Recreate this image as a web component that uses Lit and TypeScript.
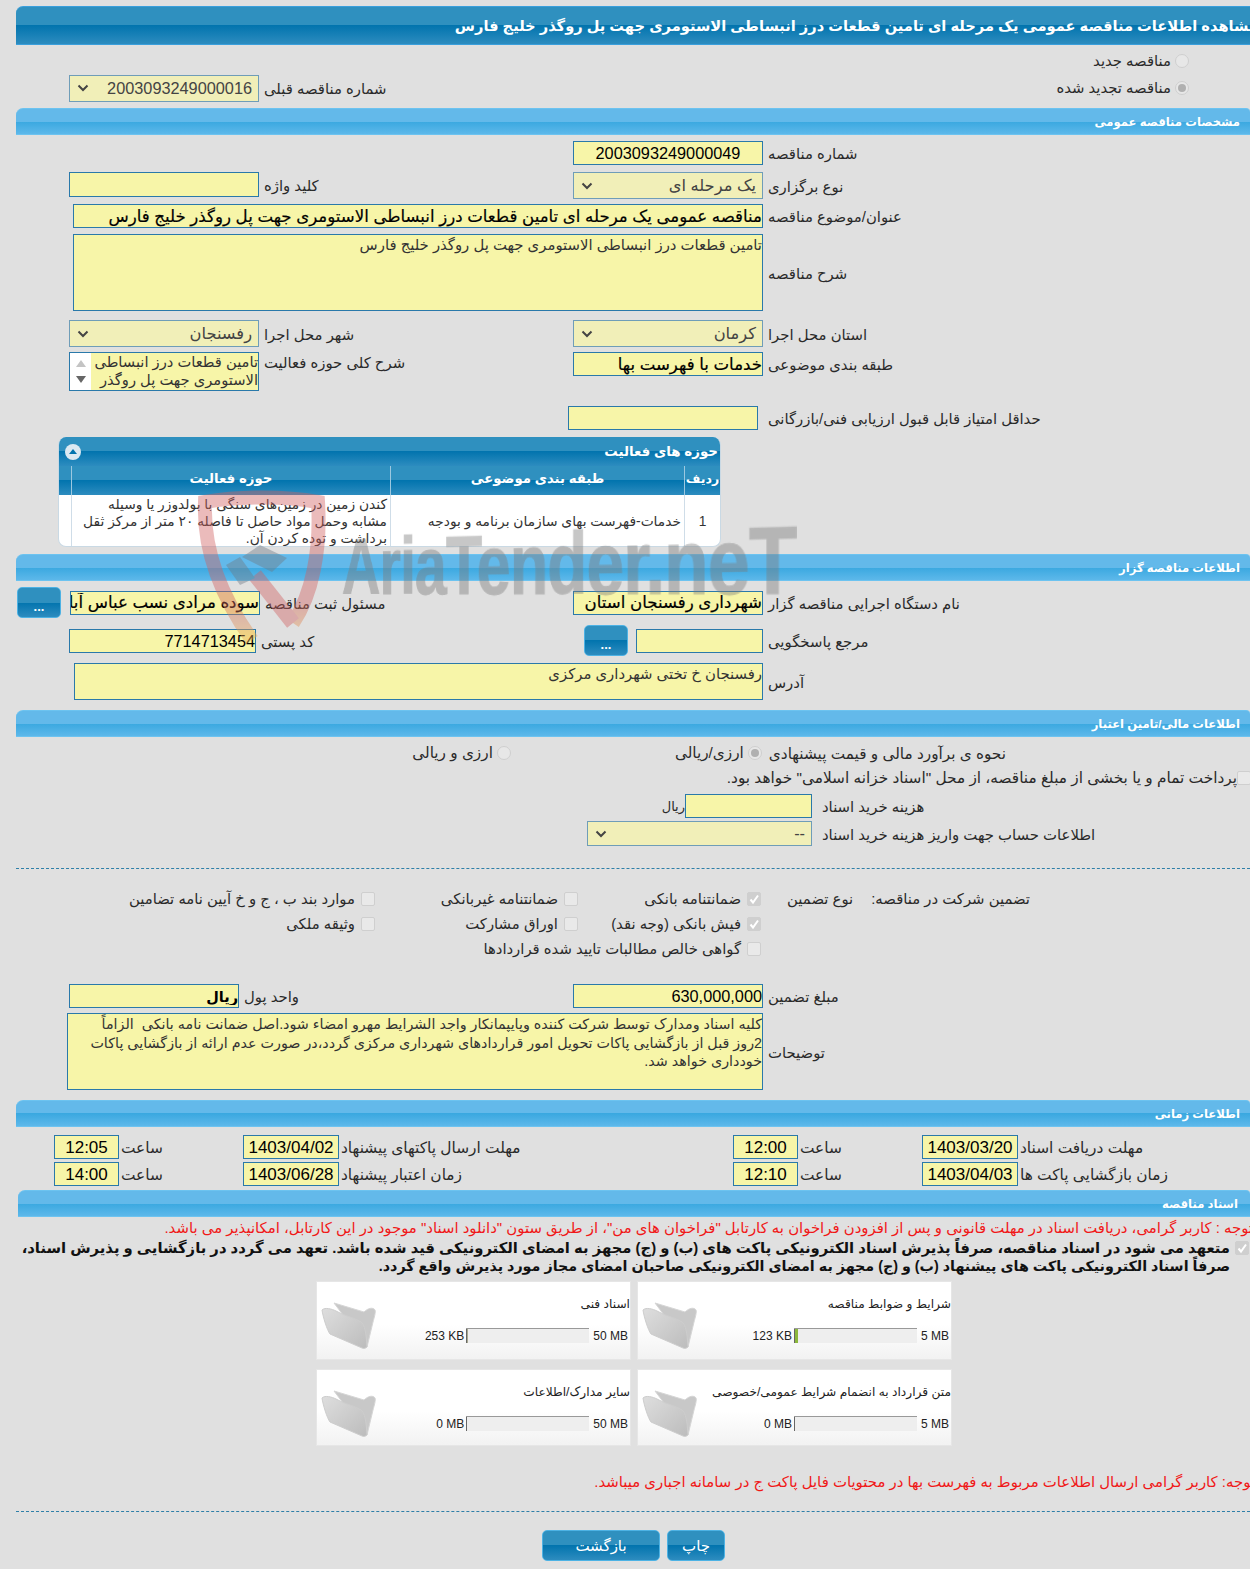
import { LitElement, html, css } from "lit";
import { customElement } from "lit/decorators.js";

const chevron = html`<svg class="chev" width="12" height="8" viewBox="0 0 12 8"><path d="M1.5 1.5 6 6l4.500-4.500" fill="none" stroke="#444" stroke-width="2"/></svg>`;
const check = html`<svg width="12" height="12" viewBox="0 0 12 12"><path d="M2.500 6.500 5 9.500 10 2.500" fill="none" stroke="#fff" stroke-width="2"/></svg>`;
const folder = (paper: boolean) => html`<svg class="folder" width="60" height="52" viewBox="0 0 60 52">
  <defs><linearGradient id="fg" x1="0" y1="0" x2="1" y2="1"><stop offset="0" stop-color="#dedede"/><stop offset="1" stop-color="#bcbcbc"/></linearGradient></defs>
  <path d="M14 6 44 15c4-4 9-5 11-2 1 2-1 8-2 12l-6 25z" fill="#c8c8c8" stroke="#d6d6d6" stroke-linejoin="round"/>
  ${paper ? html`<path d="M15 4 47 14 50 24 45 38 13 16z" fill="#fbfbfb" stroke="#e4e4e4" stroke-linejoin="round"/>` : ""}
  <path d="M2 13c3-3 10-1 14 1 8 5 18 6 25 11 3 2 4 8 5 13l1 12c-1 1-3 2-5 1L10 37C7 33 3 20 2 13z" fill="url(#fg)" stroke="#cdcdcd" stroke-linejoin="round"/>
</svg>`;

@customElement("app-root")
export class AppRoot extends LitElement {
  static styles = css`
    :host { display:block; position:relative; width:1250px; height:1569px; overflow:hidden; background:#e0e0e0;
      font-family:"Liberation Sans","DejaVu Sans",sans-serif; font-size:14.85px; color:#2a2a2a; direction:rtl; }
    * { box-sizing:border-box; }
    .page { padding:6px 0 0 16px; }
    .title { height:39px; border:1px solid #3a9fdc; border-width:1px 0 1px 0; border-top-left-radius:7px;
      background:linear-gradient(#2f90bf 0 50%,#0274ae 50%,#2d8cbf 100%); color:#fff; font-weight:bold; font-size:14.65px;
      display:flex; align-items:center; white-space:nowrap; overflow:hidden; }
    .title span { margin-right:-8px; }
    .sec { height:27px; border-top-left-radius:7px; border-top-right-radius:4px; border-top:1px solid #6cc3f0; border-bottom:1px solid #6cc3f0;
      background:linear-gradient(#63b9ea 0 50%,#3aa8e0 50%,#5db8ea 100%); color:#fff; font-weight:bold; font-size:11.6px;
      display:flex; align-items:center; padding-right:10px; }
    .sec.s5 { margin-left:2px; padding-right:12px; }
    .mt10 { margin-top:10px; }
    .row { display:flex; align-items:center; min-width:0; }
    .row.top { align-items:flex-start; }
    .cr { flex:none; width:677px; display:flex; align-items:center; justify-content:flex-end; gap:5px; }
    .cr.wide { width:682px; gap:10px; }
    .cr.withbtn { padding-left:11px; }
    .cl { flex:1; display:flex; align-items:center; justify-content:flex-end; gap:5px; padding-left:53px; min-width:0; }
    .cl.pl1 { padding-left:1px; }
    .cf { flex:1; display:flex; align-items:center; justify-content:flex-end; gap:5px; }
    .top .cl.up { align-items:flex-start; }
    .pl57 { padding-left:57px; } .pl58 { padding-left:58px; } .pl51 { padding-left:51px; }
    .lbl { white-space:nowrap; padding-top:2px; }
    .uplbl { padding-top:2px; }
    input, textarea { font:inherit; color:#000; direction:rtl; border:1px solid #2a79aa; background:#f7f5a8; padding:0; margin:0; outline:none; border-radius:0; display:block; resize:none; overflow:hidden; }
    .f { height:25px; font-size:16.3px; width:190px; flex:none; padding-top:1px; }
    .c { text-align:center; }
    .big { font-size:16.6px; -webkit-text-stroke:.2px #000; }
    .rb { font-size:14.5px; font-weight:bold; }
    .sel { height:27px; width:190px; flex:none; border:1px solid #6f9db8; background:#f1efb8; color:#444; font-size:16.3px; display:flex; align-items:center; justify-content:space-between; padding:0 6px 0 7px; white-space:nowrap; }
    .w127 { width:127px; } .w170 { width:170px; } .w690 { width:690px; } .w689 { width:689px; } .w696 { width:696px; } .w187 { width:187px; } .w225 { width:225px; }
    .h24 { height:24px; } .h25 { height:25px; } .h77 { height:77px; } .h37 { height:37px; }
    textarea { padding:1px 0 0 0; }
    .ta { font-size:14.85px; color:#333; line-height:18.500px; }
    .ta.small { font-size:14.3px; }
    .radio { width:14px; height:14px; border-radius:50%; border:1px solid #cfcfcf; background:#e7e7e7; flex:none; display:flex; align-items:center; justify-content:center; }
    .radio.on::after { content:""; width:8px; height:8px; border-radius:50%; background:#b0b0b0; }
    .cb { width:14px; height:14px; border-radius:2px; border:1px solid #cfcfcf; background:#e9e9e9; flex:none; display:flex; align-items:center; justify-content:center; }
    .cb.on { background:#cfcfcf; }
    .opt { display:flex; align-items:center; gap:4px; white-space:nowrap; }
    .gtop { display:grid; grid-template-rows:27px 28px; padding:2px 0 6px; }
    .mr60 { padding-right:61px; }
    .right-opt { flex:none; }
    .g1 { display:grid; padding-top:6px; grid-template-rows:31px 32px 30px 86px 32px 54px 31px 117px; }
    .list { width:190px; height:39px; flex:none; border:1px solid #2a79aa; background:#fff; display:flex; overflow:hidden; font-size:14.7px; line-height:18px; color:#333; }
    .list .opts { width:167px; flex:none; background:#f7f5a8; white-space:nowrap; overflow:hidden; }
    .list .bar { flex:1; display:flex; flex-direction:column; align-items:center; justify-content:space-around; padding:2px 0; background:#fff; }
    .tri { width:0; height:0; border-left:5px solid transparent; border-right:5px solid transparent; }
    .tri.u { border-bottom:7px solid #c4c4c4; } .tri.d { border-top:7px solid #666; }
    .panelwrap { display:flex; padding-right:529px; }
    .panel { width:663px; flex:none; height:110px; border:1px solid #c9d9e4; border-top:0; border-radius:8px; overflow:hidden; background:#fff; }
    .ph { height:29px; background:linear-gradient(#2f90bf 0 50%,#0274ae 50%,#2d8cbf 100%); color:#fff; font-weight:bold; font-size:13.4px; display:flex; align-items:center; justify-content:space-between; padding:0 2px 0 6px; }
    .collapse { width:16px; height:16px; border-radius:50%; background:#dbe9f2; display:flex; align-items:center; justify-content:center; }
    .cols { display:grid; grid-template-columns:36px 294px 319px 1fr; }
    .cols.hd { height:29px; background:linear-gradient(#2f90bf 0 50%,#0274ae 50%,#2d8cbf 100%); color:#fff; font-weight:bold; font-size:13.3px; }
    .cols.hd > div { display:flex; align-items:center; justify-content:center; border-left:1px solid #9cc8e0; padding-bottom:4px; }
    .cols.hd > div:first-child { font-size:12.6px; }
    .cols.hd > div:last-child { border:0; }
    .cols.bd { height:52px; font-size:13.8px; line-height:17px; color:#333; }
    .cols.bd > div { border-left:1px solid #cfdde8; padding:1px 3px 0 3px; white-space:nowrap; overflow:hidden; }
    .cols.bd > div:last-child { border:0; }
    .mid { display:flex; align-items:center; justify-content:center; }
    .midr { display:flex; align-items:center; justify-content:flex-start; }
    .g2 { display:grid; padding:6px 0 10px; row-gap:7px; grid-template-rows:31px 31px 37px; }
    .btn { background:linear-gradient(#2f90bf 0 50%,#0274ae 50%,#2d8cbf 100%); border:1px solid #4db2e4; border-radius:5px; color:#fff; display:flex; align-items:center; justify-content:center; flex:none; white-space:nowrap; }
    .dots { width:44px; height:31px; font-size:13px; font-weight:bold; padding-top:8px; margin-right:3px; }
    .cl .dots { margin-right:4px; }
    .g3 { display:grid; grid-template-rows:30px 20px 7px 27px 25px; }
    .g3 .a { padding-right:244px; padding-top:2px; font-size:15.3px; }
    .gr1 { margin-right:7px; } .gr2 { margin-right:164px; }
    .edge { margin-right:-1px; gap:0; font-size:15.35px; padding-top:1px; }
    .lcol { width:428px; text-align:left; flex:none; white-space:nowrap; line-height:24px; padding-top:1px; }
    .lcol.l2 { padding-top:2px; }
    .gapf { gap:10px; }
    .rial { margin-right:-10px; line-height:24px; font-size:13px; padding-top:1px; }
    .dash { border-top:1px dashed #2f7fa8; height:0; }
    .d1 { margin-top:22px; } .d2 { margin-top:19px; }
    .g4 { display:grid; padding-top:17px; grid-template-rows:25px 25px 25px; grid-template-columns:220px 269px 183px 203px 1fr; }
    .g4 .o1 { display:flex; gap:18px; white-space:nowrap; align-items:center; }
    .g4 > div { display:flex; align-items:center; }
    .g4 .opt { gap:6px; }
    .g5 { display:grid; padding-top:23px; grid-template-rows:29px 77px; }
    .g6 { display:grid; padding:8px 0 4px; grid-template-rows:24px 24px; row-gap:3px; }
    .t { display:flex; align-items:center; gap:2px; font-size:15.4px; }
    .t .f { width:96px; height:24px; font-size:17px; text-align:center; }
    .t .f.s { width:65px; }
    .tl { text-align:left; flex:none; white-space:nowrap; padding-top:2px; }
    .w230 { width:230px; } .w120 { width:120px; } .w392 { width:390px; }
    .rednote { color:#f01818; white-space:nowrap; font-size:14.9px; }
    .rn1 { margin-top:2px; height:18px; line-height:18px; margin-right:-3px; }
    .rn2 { margin-top:26px; height:20px; line-height:20px; margin-right:-5px; }
    .commit { display:flex; gap:5px; margin-top:2px; align-items:flex-start; padding-right:1px; }
    .commit .cb { margin-top:2px; }
    .commit p { margin:0; font-weight:bold; color:#111; font-size:14.8px; line-height:18px; white-space:nowrap; }
    .commit .l2 { font-size:14.3px; }
    .cards { display:grid; grid-template-columns:315px 315px; grid-template-rows:79px 77px; gap:9px 6px; padding-right:298px; margin-top:6px; justify-content:start; }
    .card { background:linear-gradient(#fff 55%,#f2f2f2 100%); border:1px solid #e6e6e6; display:flex; justify-content:space-between; padding:0 0 0 3px; }
    .cb-body { padding:13px 0 0 0; flex:1; }
    .ct { font-size:12.2px; color:#222; height:18px; line-height:18px; }
    .br { display:flex; align-items:center; gap:2px; margin-top:15px; font-size:12px; color:#222; white-space:nowrap; padding-right:2px; }
    .pg { width:123px; height:15px; background:#eee; border-top:1px solid #999; display:flex; justify-content:flex-end; flex:none; margin-right:2px; }
    .pg i { display:block; height:100%; width:4px; background:#8cb83c; border-left:1px solid #666; }
    .pg i.t0 { width:1px; background:#666; }
    .pg i.g { width:2px; background:#a8a890; }
    .folder { flex:none; margin-top:15px; }
    .btns { display:flex; gap:7px; padding-right:525px; margin-top:18px; }
    .b1 { width:58px; height:31px; font-size:15px; } .b2 { width:118px; height:31px; font-size:15px; }
    .wm { position:absolute; inset:0; pointer-events:none; }
    .wmt { position:absolute; left:342px; top:528px; font:bold 78px/78px "Liberation Sans",sans-serif; color:#7a7a7a; opacity:.42; direction:ltr; white-space:nowrap; transform-origin:0 86%; transform:perspective(800px) rotateY(-23deg) scaleX(.725); letter-spacing:-1px; -webkit-text-stroke:1px #7a7a7a; }
    .wms { position:absolute; left:190px; top:490px; opacity:.42; }
  `;

  private f(cls: string, v = "") { return html`<input class="f ${cls}" value=${v} readonly />`; }
  private sel(cls: string, v: string) { return html`<div class="sel ${cls}"><span>${v}</span>${chevron}</div>`; }
  private card(title: string, max: string, val: string, kind: string, paper: boolean) {
    return html`<div class="card"><div class="cb-body"><div class="ct">${title}</div>
      <div class="br"><bdi>${max}</bdi><div class="pg"><i class=${kind}></i></div><bdi>${val}</bdi></div></div>${folder(paper)}</div>`;
  }

  render() {
    return html`<div class="page">
      <div class="title"><span>مشاهده اطلاعات مناقصه عمومی یک مرحله ای تامین قطعات درز انبساطی الاستومری جهت پل روگذر خلیج فارس</span></div>
      <div class="gtop">
        <div class="row mr60"><div class="opt"><span class="radio"></span><span>مناقصه جدید</span></div></div>
        <div class="row"><div class="mr60 opt right-opt"><span class="radio on"></span><span>مناقصه تجدید شده</span></div>
          <div class="cl"><span class="lbl">شماره مناقصه قبلی</span>${this.sel("", "2003093249000016")}</div></div>
      </div>
      <div class="sec">مشخصات مناقصه عمومی</div>
      <div class="g1">
        <div class="row top"><div class="cr"><span class="lbl">شماره مناقصه</span>${this.f("c h24", "2003093249000049")}</div></div>
        <div class="row top"><div class="cr"><span class="lbl">نوع برگزاری</span>${this.sel("", "یک مرحله ای")}</div>
          <div class="cl"><span class="lbl">کلید واژه</span>${this.f("")}</div></div>
        <div class="row top"><div class="cf pl57"><span class="lbl">عنوان/موضوع مناقصه</span><input class="f w690 big h24" value="مناقصه عمومی یک مرحله ای تامین قطعات درز انبساطی الاستومری جهت پل روگذر خلیج فارس" readonly /></div></div>
        <div class="row top"><div class="cf pl57"><span class="lbl">شرح مناقصه</span><textarea class="w690 h77 ta" readonly>تامین قطعات درز انبساطی الاستومری جهت پل روگذر خلیج فارس</textarea></div></div>
        <div class="row top"><div class="cr"><span class="lbl">استان محل اجرا</span>${this.sel("", "کرمان")}</div>
          <div class="cl"><span class="lbl">شهر محل اجرا</span>${this.sel("", "رفسنجان")}</div></div>
        <div class="row top"><div class="cr"><span class="lbl">طبقه بندی موضوعی</span><input class="f big h24" value="خدمات با فهرست بها" readonly /></div>
          <div class="cl up"><span class="lbl uplbl">شرح کلی حوزه فعالیت</span><div class="list"><div class="opts">تامین قطعات درز انبساطی<br />الاستومری جهت پل روگذر</div><div class="bar"><i class="tri u"></i><i class="tri d"></i></div></div></div></div>
        <div class="row top"><div class="cr wide"><span class="lbl">حداقل امتیاز قابل قبول ارزیابی فنی/بازرگانی</span><input class="f h24" /></div></div>
        <div class="panelwrap"><div class="panel">
          <div class="ph"><span>حوزه های فعالیت</span><span class="collapse"><svg width="10" height="10" viewBox="0 0 10 10"><path d="M1 7 5 2l4 5z" fill="#0274ae"/></svg></span></div>
          <div class="cols hd"><div>ردیف</div><div>طبقه بندی موضوعی</div><div>حوزه فعالیت</div><div></div></div>
          <div class="cols bd"><div class="mid">1</div><div class="midr">خدمات-فهرست بهای سازمان برنامه و بودجه</div><div>کندن زمین در زمین‌های سنگی با بولدوزر یا وسیله<br />مشابه وحمل مواد حاصل  تا فاصله ۲۰ متر از مرکز ثقل<br />برداشت و توده کردن  آن.</div><div></div></div>
        </div></div>
      </div>
      <div class="sec">اطلاعات مناقصه گزار</div>
      <div class="g2">
        <div class="row"><div class="cr"><span class="lbl">نام دستگاه اجرایی مناقصه گزار</span><input class="f big h24" value="شهرداری رفسنجان استان" readonly /></div>
          <div class="cl pl1"><span class="lbl">مسئول ثبت مناقصه</span><input class="f big h24" value="سوده مرادی نسب عباس آبادی" readonly /><div class="btn dots">...</div></div></div>
        <div class="row"><div class="cr withbtn"><span class="lbl">مرجع پاسخگویی</span><input class="f w127 h24" /><div class="btn dots">...</div></div>
          <div class="cl"><span class="lbl">کد پستی</span><input class="f w187 h24" value="7714713454" readonly /></div></div>
        <div class="row"><div class="cf pl58"><span class="lbl">آدرس</span><textarea class="w689 h37 ta" readonly>رفسنجان خ تختی شهرداری مرکزی</textarea></div></div>
      </div>
      <div class="sec">اطلاعات مالی/تامین اعتبار</div>
      <div class="g3">
        <div class="row a"><span class="lbl">نحوه ی برآورد مالی و قیمت پیشنهادی</span><span class="opt gr1"><span class="radio on"></span><span>ارزی/ریالی</span></span><span class="opt gr2"><span class="radio"></span><span>ارزی و ریالی</span></span></div>
        <div class="row"><span class="opt edge"><span class="cb"></span><span>پرداخت تمام و یا بخشی از مبلغ مناقصه، از محل "اسناد خزانه اسلامی" خواهد بود.</span></span></div>
        <div></div>
        <div class="row top gapf"><span class="lcol">هزینه خرید اسناد</span><input class="f w127 h24" /><span class="rial">ریال</span></div>
        <div class="row top gapf"><span class="lcol l2">اطلاعات حساب جهت واریز هزینه خرید اسناد</span>${this.sel("w225 h25", "--")}</div>
      </div>
      <div class="dash d1"></div>
      <div class="g4">
        <div></div><div class="o1"><span>تضمین شرکت در مناقصه:</span><span>نوع تضمین</span></div>
        <div class="opt"><span class="cb on">${check}</span><span>ضمانتنامه بانکی</span></div>
        <div class="opt"><span class="cb"></span><span>ضمانتنامه غیربانکی</span></div>
        <div class="opt"><span class="cb"></span><span>موارد بند ب ، ج و خ آیین نامه تضامین</span></div>
        <div></div><div></div>
        <div class="opt"><span class="cb on">${check}</span><span>فیش بانکی (وجه نقد)</span></div>
        <div class="opt"><span class="cb"></span><span>اوراق مشارکت</span></div>
        <div class="opt"><span class="cb"></span><span>وثیقه ملکی</span></div>
        <div></div><div></div>
        <div class="opt"><span class="cb"></span><span>گواهی خالص مطالبات تایید شده قراردادها</span></div>
      </div>
      <div class="g5">
        <div class="row top"><div class="cr"><span class="lbl">مبلغ تضمین</span><input class="f h24" value="630,000,000" readonly /></div>
          <div class="cl"><span class="lbl">واحد پول</span><input class="f w170 rb h24" value="ریال" readonly /></div></div>
        <div class="row top"><div class="cf pl51"><span class="lbl">توضیحات</span><textarea class="w696 h77 ta small" readonly>${"کلیه اسناد ومدارک توسط شرکت کننده وپایپمانکار واجد الشرایط مهرو امضاء شود.اصل ضمانت نامه بانکی  الزاماً\n2روز قبل از بازگشایی پاکات تحویل امور قراردادهای شهرداری مرکزی گردد،در صورت عدم ارائه از بازگشایی پاکات\nخودداری خواهد شد."}</textarea></div></div>
      </div>
      <div class="sec mt10">اطلاعات زمانی</div>
      <div class="g6">
        <div class="t"><span class="tl w230">مهلت دریافت اسناد</span><input class="f" value="1403/03/20" readonly /><span class="tl w120">ساعت</span><input class="f s" value="12:00" readonly /><span class="tl w392">مهلت ارسال پاکتهای پیشنهاد</span><input class="f" value="1403/04/02" readonly /><span class="tl w120">ساعت</span><input class="f s" value="12:05" readonly /></div>
        <div class="t"><span class="tl w230">زمان بازگشایی پاکت ها</span><input class="f" value="1403/04/03" readonly /><span class="tl w120">ساعت</span><input class="f s" value="12:10" readonly /><span class="tl w392">زمان اعتبار پیشنهاد</span><input class="f" value="1403/06/28" readonly /><span class="tl w120">ساعت</span><input class="f s" value="14:00" readonly /></div>
      </div>
      <div class="sec s5">اسناد مناقصه</div>
      <div class="rednote rn1">توجه : کاربر گرامی، دریافت اسناد در مهلت قانونی و پس از افزودن فراخوان به کارتابل "فراخوان های من"، از طریق ستون "دانلود اسناد" موجود در این کارتابل، امکانپذیر می باشد.</div>
      <div class="commit"><span class="cb on">${check}</span><p>متعهد می شود در اسناد مناقصه، صرفاً پذیرش اسناد الکترونیکی پاکت های (ب) و (ج) مجهز به امضای الکترونیکی قید شده باشد. تعهد می گردد در بازگشایی و پذیرش اسناد،<br /><span class="l2">صرفاً اسناد الکترونیکی پاکت های پیشنهاد (ب) و (ج) مجهز به امضای الکترونیکی صاحبان امضای مجاز مورد پذیرش واقع گردد.</span></p></div>
      <div class="cards">
        ${this.card("شرایط و ضوابط مناقصه", "5 MB", "123 KB", "", true)}
        ${this.card("اسناد فنی", "50 MB", "253 KB", "g", true)}
        ${this.card("متن قرارداد به انضمام شرایط عمومی/خصوصی", "5 MB", "0 MB", "t0", false)}
        ${this.card("سایر مدارک/اطلاعات", "50 MB", "0 MB", "t0", false)}
      </div>
      <div class="rednote rn2">توجه: کاربر گرامی ارسال اطلاعات مربوط به فهرست بها در محتویات فایل پاکت ج در سامانه اجباری میباشد.</div>
      <div class="dash d2"></div>
      <div class="btns"><div class="btn b1">چاپ</div><div class="btn b2">بازگشت</div></div>
    </div>
    <div class="wm" aria-hidden="true">
      <svg class="wms" width="145" height="155" viewBox="0 0 145 155">
        <defs><linearGradient id="sg" gradientUnits="userSpaceOnUse" x1="0" y1="0" x2="0" y2="155"><stop offset=".72" stop-color="#d06060"/><stop offset=".95" stop-color="#e8a850"/></linearGradient></defs>
        <path d="M62 150C30 105 13 60 15 12 50 6 95 6 128 12c3 48-6 93-25 121" fill="none" stroke="url(#sg)" stroke-width="14"/>
        <path d="M65 85 103 133" stroke="#d06060" stroke-width="15"/>
        <path d="M36 75 50 67 65 88 50 95z" fill="#6f7a84"/>
        <path d="M52 67 70 55 97 68 82 82z" fill="#6f7a84"/>
      </svg>
      <div class="wmt">AriaTender.neT</div>
    </div>`;
  }
}
